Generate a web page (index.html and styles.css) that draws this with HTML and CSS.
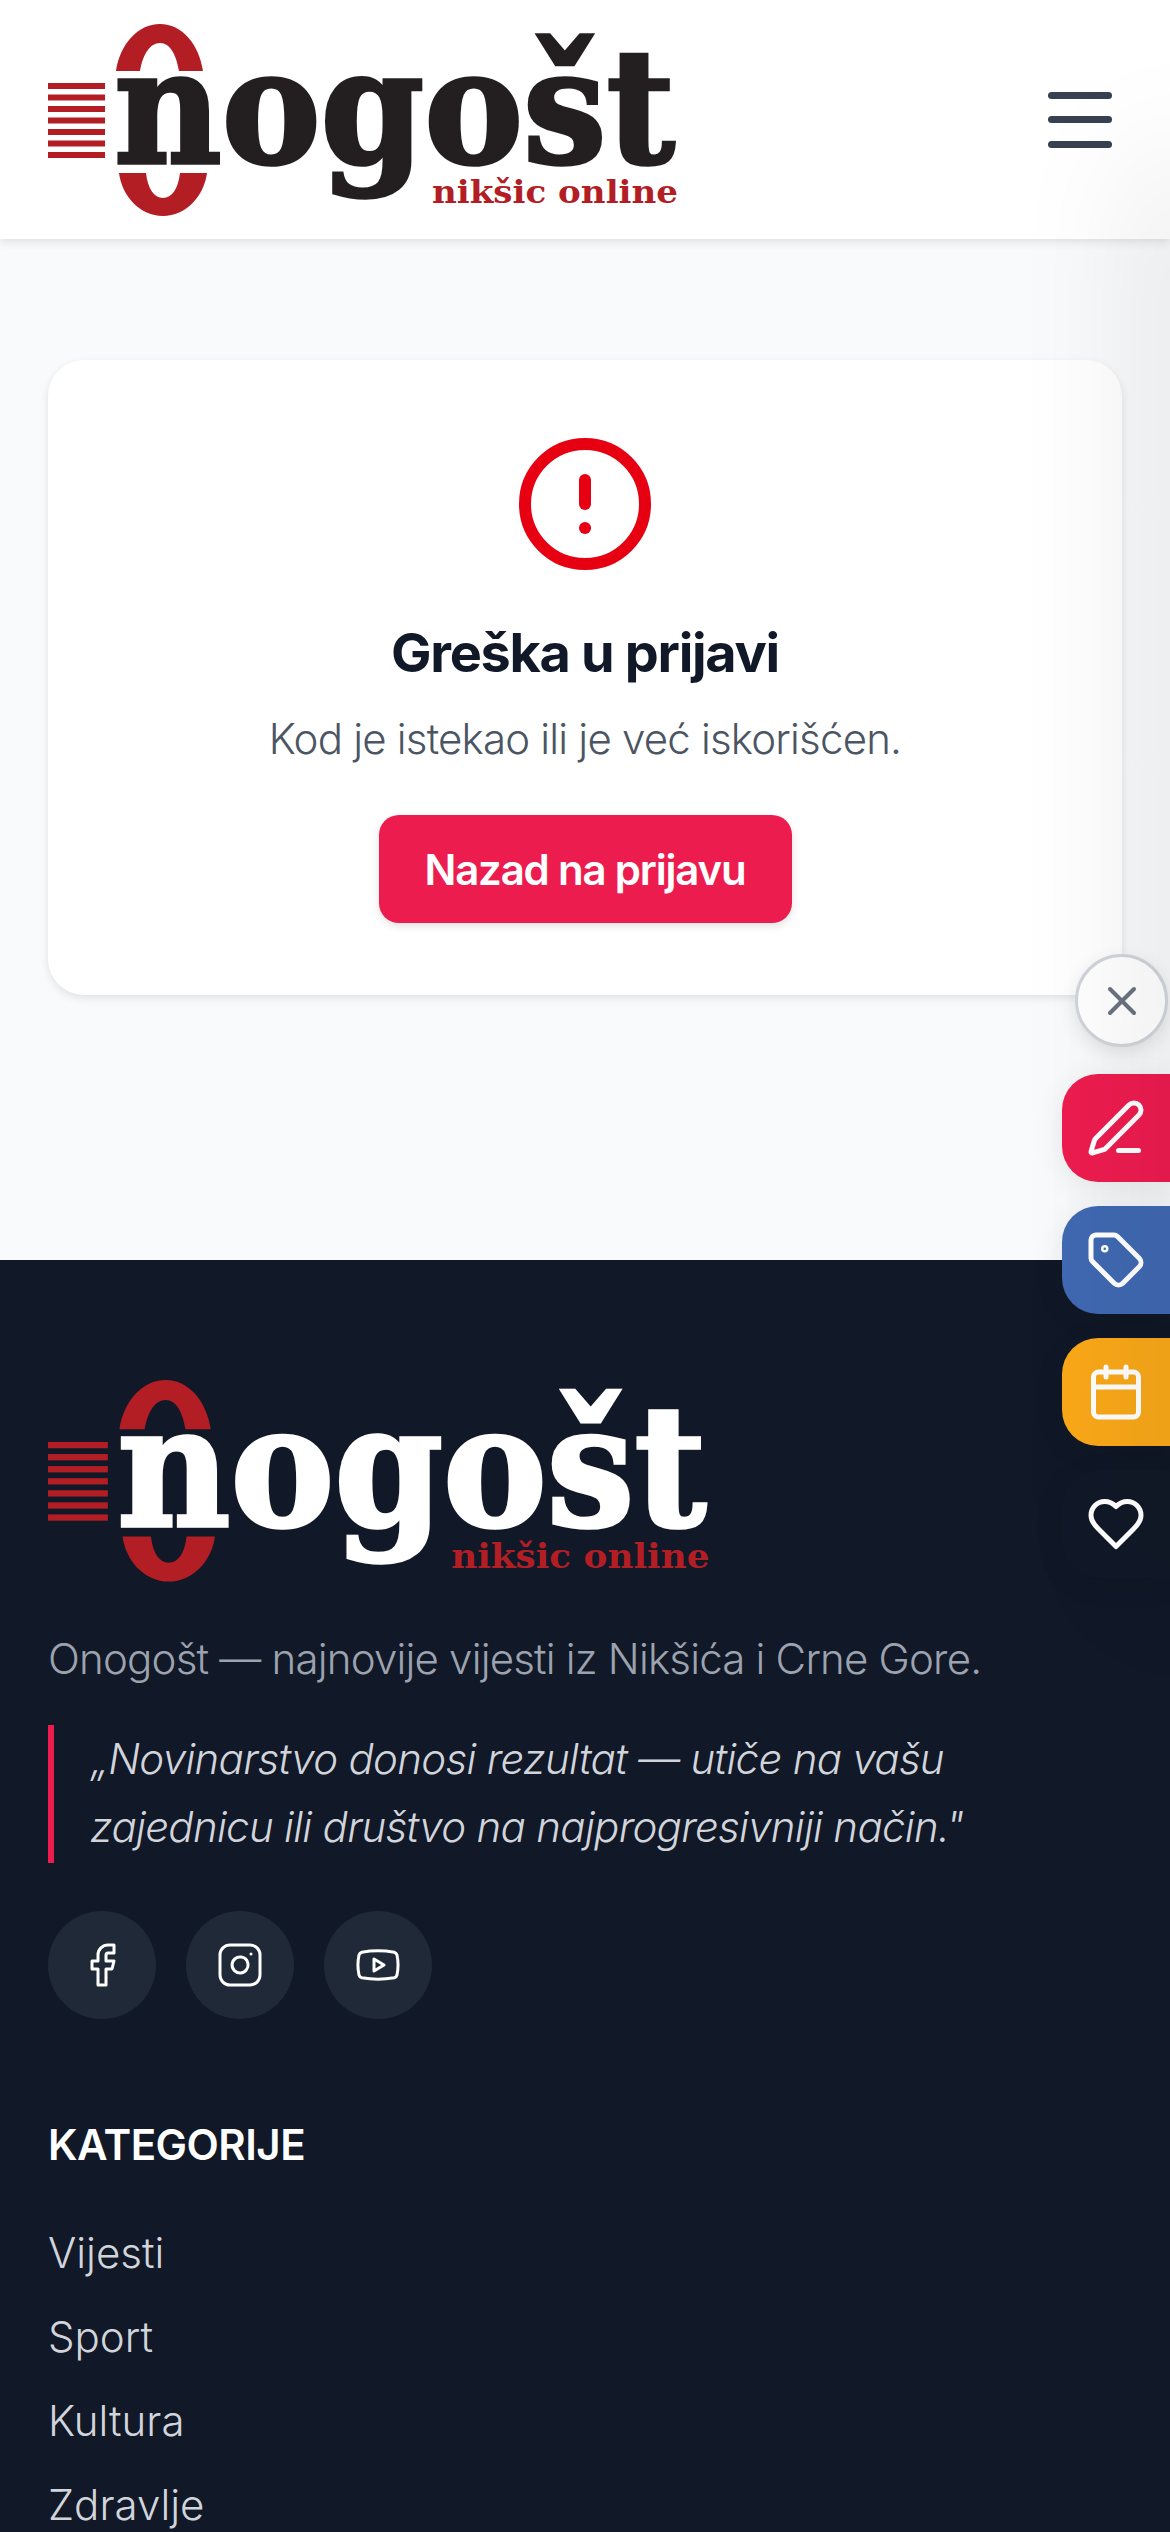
FILE: index.html
```html
<!DOCTYPE html>
<html lang="sr">
<head>
    <meta charset="UTF-8">
    <meta name="viewport" content="width=device-width, initial-scale=1.0">
    <title>Greška u prijavi - Onogošt</title>
    <link rel="stylesheet" href="styles.css">
</head>
<body>
    <header class="site-header">
        <svg class="logo logo-header" viewBox="0 0 640 192">
            <g class="logo-red">
                <path d="M68 47C72 20 90 0 112 0C134 0 151 20 155 47H131C128 30 122 19 112 19C102 19 95 30 92 47Z"/>
                <path d="M71 149H98C100 165 106 174 115 174C124 174 130 165 132 149H159C156 172 138 192 115 192C92 192 74 172 71 149Z"/>
                <rect x="0" y="59" width="57" height="6"/>
                <rect x="0" y="70.5" width="57" height="6"/>
                <rect x="0" y="82" width="57" height="6"/>
                <rect x="0" y="93.5" width="57" height="6"/>
                <rect x="0" y="105" width="57" height="6"/>
                <rect x="0" y="116.5" width="57" height="6"/>
                <rect x="0" y="128" width="57" height="6"/>
            </g>
            <text class="logo-word" x="66" y="139" textLength="561" lengthAdjust="spacingAndGlyphs">nogošt</text>
            <text class="logo-sub" x="384" y="179" textLength="246" lengthAdjust="spacingAndGlyphs">nikšic online</text>
        </svg>
        <button class="menu-btn" aria-label="Meni">
            <span></span>
            <span></span>
            <span></span>
        </button>
    </header>

    <main class="page-main">
        <div class="error-card">
            <svg class="error-icon" viewBox="0 0 24 24">
                <circle cx="12" cy="12" r="10"/>
                <path d="M12 8v4"/>
                <path d="M12 16h.01"/>
            </svg>
            <h1>Greška u prijavi</h1>
            <p>Kod je istekao ili je već iskorišćen.</p>
            <a class="back-btn" href="#">Nazad na prijavu</a>
        </div>
    </main>

    <footer class="site-footer">
        <svg class="logo logo-footer" viewBox="0 0 640 192">
            <g class="logo-red">
                <path d="M68 47C72 20 90 0 112 0C134 0 151 20 155 47H131C128 30 122 19 112 19C102 19 95 30 92 47Z"/>
                <path d="M71 149H98C100 165 106 174 115 174C124 174 130 165 132 149H159C156 172 138 192 115 192C92 192 74 172 71 149Z"/>
                <rect x="0" y="59" width="57" height="6"/>
                <rect x="0" y="70.5" width="57" height="6"/>
                <rect x="0" y="82" width="57" height="6"/>
                <rect x="0" y="93.5" width="57" height="6"/>
                <rect x="0" y="105" width="57" height="6"/>
                <rect x="0" y="116.5" width="57" height="6"/>
                <rect x="0" y="128" width="57" height="6"/>
            </g>
            <text class="logo-word" x="66" y="139" textLength="561" lengthAdjust="spacingAndGlyphs">nogošt</text>
            <text class="logo-sub" x="384" y="179" textLength="246" lengthAdjust="spacingAndGlyphs">nikšic online</text>
        </svg>
        <p class="tagline">Onogošt — najnovije vijesti iz Nikšića i Crne Gore.</p>
        <blockquote class="motto">„Novinarstvo donosi rezultat — utiče na vašu zajednicu ili društvo na najprogresivniji način."</blockquote>
        <div class="socials">
            <a class="social-link" href="#" aria-label="Facebook">
                <svg viewBox="0 0 24 24"><path d="M18 2h-3a5 5 0 0 0-5 5v3H7v4h3v8h4v-8h3l1-4h-4V7a1 1 0 0 1 1-1h3z"/></svg>
            </a>
            <a class="social-link" href="#" aria-label="Instagram">
                <svg viewBox="0 0 24 24"><rect x="2" y="2" width="20" height="20" rx="5"/><path d="M16 11.37A4 4 0 1 1 12.63 8 4 4 0 0 1 16 11.37z"/><path d="M17.5 6.5h.01"/></svg>
            </a>
            <a class="social-link" href="#" aria-label="YouTube">
                <svg viewBox="0 0 24 24"><path d="M2.5 17a24.12 24.12 0 0 1 0-10 2 2 0 0 1 1.4-1.4 49.56 49.56 0 0 1 16.2 0A2 2 0 0 1 21.5 7a24.12 24.12 0 0 1 0 10 2 2 0 0 1-1.4 1.4 49.55 49.55 0 0 1-16.2 0A2 2 0 0 1 2.5 17"/><path d="m10 15 5-3-5-3z"/></svg>
            </a>
        </div>
        <h2 class="footer-title">Kategorije</h2>
        <ul class="footer-links">
            <li><a href="#">Vijesti</a></li>
            <li><a href="#">Sport</a></li>
            <li><a href="#">Kultura</a></li>
            <li><a href="#">Zdravlje</a></li>
        </ul>
    </footer>

    <!-- Plutajuci meni desno -->
    <div class="side-rail">
        <button class="side-close" aria-label="Zatvori">
            <svg viewBox="0 0 24 24"><path d="M18 6 6 18"/><path d="m6 6 12 12"/></svg>
        </button>
        <a class="side-item side-pink" href="#" aria-label="Piši">
            <svg viewBox="0 0 24 24"><path d="M13 21h8"/><path d="M21.174 6.812a1 1 0 0 0-3.986-3.987L3.842 16.174a2 2 0 0 0-.5.83l-1.321 4.352a.5.5 0 0 0 .623.622l4.353-1.32a2 2 0 0 0 .83-.497z"/></svg>
        </a>
        <a class="side-item side-blue" href="#" aria-label="Oglasi">
            <svg viewBox="0 0 24 24"><path d="M12.586 2.586A2 2 0 0 0 11.172 2H4a2 2 0 0 0-2 2v7.172a2 2 0 0 0 .586 1.414l8.704 8.704a2.426 2.426 0 0 0 3.42 0l6.58-6.58a2.426 2.426 0 0 0 0-3.42z"/><circle cx="7.5" cy="7.5" r=".5"/></svg>
        </a>
        <a class="side-item side-orange" href="#" aria-label="Kalendar">
            <svg viewBox="0 0 24 24"><path d="M8 2v4"/><path d="M16 2v4"/><rect x="3" y="4" width="18" height="18" rx="2"/><path d="M3 10h18"/></svg>
        </a>
        <a class="side-item side-dark" href="#" aria-label="Omiljeno">
            <svg viewBox="0 0 24 24"><path d="M19 14c1.49-1.46 3-3.21 3-5.5A5.5 5.5 0 0 0 16.5 3c-1.76 0-3 .5-4.5 2-1.5-1.5-2.74-2-4.5-2A5.5 5.5 0 0 0 2 8.5c0 2.3 1.5 4.05 3 5.5l7 7Z"/></svg>
        </a>
    </div>
    <div class="edge-shade"></div>
</body>
</html>
```

FILE: styles.css
```css
* {
    box-sizing: border-box;
}

html,
body {
    height: 2532px;
    overflow: hidden;
}

body {
    font-family: 'Inter', 'Noto Sans', sans-serif;
    background-color: #f9fafb;
    margin: 0;
    padding: 0;
    position: relative;
}

svg {
    display: block;
    fill: none;
    stroke: currentColor;
    stroke-width: 2;
    stroke-linecap: round;
    stroke-linejoin: round;
}

/* Logo */
.logo {
    stroke: none;
    overflow: visible;
}

.logo-header {
    width: 640px;
    height: 192px;
    color: #231f20;
}

.logo-footer {
    width: 672px;
    height: 201.6px;
    color: #fff;
}

.logo-red {
    fill: #b31e25;
}

.logo-word {
    font-family: 'DejaVu Serif', serif;
    font-weight: bold;
    font-size: 160px;
    fill: currentColor;
    stroke: currentColor;
    stroke-width: 3.5;
    stroke-linejoin: miter;
}

.logo-sub {
    font-family: 'DejaVu Serif', serif;
    font-weight: bold;
    font-size: 32px;
    fill: #b31e25;
}

/* Header */
.site-header {
    height: 239px;
    padding: 0 58px 0 48px;
    background-color: #fff;
    display: flex;
    justify-content: space-between;
    align-items: center;
    box-shadow: 0 3px 9px rgba(0, 0, 0, 0.1);
    position: relative;
}

.menu-btn {
    width: 64px;
    padding: 0;
    border: none;
    background: none;
    display: flex;
    flex-direction: column;
    gap: 17.5px;
}

.menu-btn span {
    height: 7px;
    border-radius: 4px;
    background-color: #374151;
}

/* Kartica */
.page-main {
    height: 1021px;
    padding: 121px 48px 0;
}

.error-card {
    height: 635px;
    padding: 72px 48px 0;
    background-color: #fff;
    border-radius: 36px;
    box-shadow: 0 3px 9px rgba(0, 0, 0, 0.1);
    display: flex;
    flex-direction: column;
    align-items: center;
}

.error-icon {
    width: 144px;
    height: 144px;
    color: #e60012;
}

.error-card h1 {
    margin: 41px 0 0;
    font-size: 54px;
    line-height: 72px;
    font-weight: 700;
    letter-spacing: -1.3px;
    color: #111827;
}

.error-card p {
    margin: 16px 0 0;
    font-size: 42px;
    line-height: 68px;
    font-weight: 300;
    letter-spacing: -0.8px;
    color: #4b5563;
}

.back-btn {
    margin-top: 42px;
    width: 413px;
    height: 108px;
    border-radius: 20px;
    background-color: #ed1c4f;
    box-shadow: 0 3px 9px rgba(0, 0, 0, 0.12);
    color: #fff;
    font-size: 42px;
    font-weight: 600;
    letter-spacing: -1.2px;
    text-decoration: none;
    display: flex;
    justify-content: center;
    align-items: center;
}

/* Footer */
.site-footer {
    height: 1272px;
    padding: 120px 48px 0;
    background-color: #111827;
}

.tagline {
    margin: 43px 0 0;
    font-size: 42px;
    line-height: 68px;
    font-weight: 300;
    letter-spacing: -0.8px;
    color: #9ca3af;
}

.motto {
    margin: 32px 0 0;
    padding: 0 0 2px 36px;
    max-width: 980px;
    border-left: 6px solid #ed1c4f;
    font-size: 42px;
    line-height: 68px;
    font-style: italic;
    font-weight: 300;
    letter-spacing: -0.7px;
    color: #d1d5db;
}

.socials {
    margin-top: 48px;
    display: flex;
    gap: 30px;
}

.social-link {
    width: 108px;
    height: 108px;
    border-radius: 50%;
    background-color: #1f2937;
    color: #fff;
    display: flex;
    justify-content: center;
    align-items: center;
}

.social-link svg {
    width: 48px;
    height: 48px;
    stroke-width: 1.5;
}

.footer-title {
    margin: 96px 0 0;
    font-size: 42px;
    line-height: 60px;
    font-weight: 600;
    letter-spacing: -0.5px;
    text-transform: uppercase;
    color: #fff;
}

.footer-links {
    list-style: none;
    margin: 48px 0 0;
    padding: 0;
    display: flex;
    flex-direction: column;
    gap: 24px;
}

.footer-links li {
    height: 60px;
}

.footer-links a {
    font-size: 42px;
    line-height: 60px;
    font-weight: 300;
    color: #d1d5db;
    text-decoration: none;
}

/* Plutajuci meni */
.side-rail {
    position: absolute;
    right: 0;
    top: 954px;
    display: flex;
    flex-direction: column;
    align-items: flex-end;
    gap: 24px;
}

.side-close {
    width: 93px;
    height: 93px;
    margin: 0 2px 3px 0;
    padding: 0;
    border: 3px solid #d1d5db;
    border-radius: 50%;
    background-color: #fff;
    color: #6b7280;
    box-shadow: 0 6px 18px rgba(0, 0, 0, 0.1);
    display: flex;
    justify-content: center;
    align-items: center;
}

.side-close svg {
    width: 48px;
    height: 48px;
}

.side-item {
    width: 108px;
    height: 108px;
    border-radius: 36px 0 0 36px;
    color: #fff;
    box-shadow: 0 6px 30px rgba(0, 0, 0, 0.08);
    display: flex;
    justify-content: center;
    align-items: center;
}

.side-item svg {
    width: 60px;
    height: 60px;
}

.side-pink {
    background-color: #ed1c4f;
}

.side-blue {
    background-color: #4069b2;
}

.side-orange {
    background-color: #f9a818;
}

.side-dark {
    background-color: #111827;
}

/* Senka uz desnu ivicu */
.edge-shade {
    position: absolute;
    top: 170px;
    right: -20px;
    width: 20px;
    height: 1400px;
    box-shadow: 0 0 130px 12px rgba(0, 0, 0, 0.17);
    pointer-events: none;
}
```
